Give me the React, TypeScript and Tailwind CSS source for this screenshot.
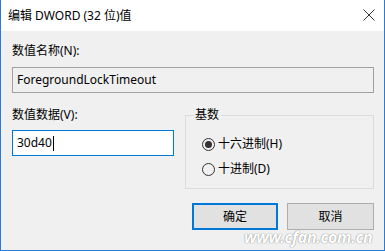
import React from "react";

const font = { fontFamily: '"Segoe UI", "Noto Sans", "Noto Sans CJK SC", sans-serif' };

export default function App() {
  return (
    <div
      className="w-[385px] h-[251px] flex flex-col bg-[#f0f0f0] border-x border-b border-[#2b7bd3] text-[12px] leading-[16px] text-black relative overflow-hidden"
      style={font}
    >
      {/* title bar */}
      <div className="h-[31px] bg-white flex items-center justify-between pl-[7px] pr-[9px]">
        <span className="text-[12px]">编辑 DWORD (32 位)值</span>
        <svg width="12" height="12" viewBox="0 0 12 12" className="mb-[1px]">
          <path d="M0.5 0.5 L11.5 11.5 M11.5 0.5 L0.5 11.5" stroke="#333" strokeWidth="1" />
        </svg>
      </div>

      <div className="flex flex-col pl-[11px] pr-[10px]">
        <div className="mt-[12px]">数值名称(N):</div>
        <div className="mt-[8px] h-[26px] border border-[#a0a0a0] bg-[#f0f0f0] flex items-center pl-[4px]">
          ForegroundLockTimeout
        </div>

        <div className="flex gap-[11px] mt-[14px]">
          <div className="w-[162px] flex flex-col">
            <div>数值数据(V):</div>
            <div className="mt-[7px] h-[26px] border border-[#0078d7] bg-white flex items-center pl-[4px]">
              30d40
              <span className="w-px h-[15px] bg-black ml-[1px]" />
            </div>
          </div>

          <fieldset className="w-[189px] h-[82px] border border-[#dcdcdc] pl-[16px]">
            <legend className="ml-[-8px] pl-[1px] pr-[2px]">基数</legend>
            <label className="flex items-center gap-[3px] mt-[13px]">
              <span className="w-[13px] h-[13px] rounded-full border border-[#333] flex items-center justify-center">
                <span className="w-[7px] h-[7px] rounded-full bg-[#333]" />
              </span>
              十六进制(H)
            </label>
            <label className="flex items-center gap-[3px] mt-[9px]">
              <span className="w-[13px] h-[13px] rounded-full border border-[#333]" />
              十进制(D)
            </label>
          </fieldset>
        </div>

        <div className="flex justify-end gap-[9px] mt-[14px]">
          <button className="w-[86px] h-[27px] bg-[#e1e1e1] border-2 border-[#0078d7]">确定</button>
          <button className="w-[87px] h-[27px] bg-[#e1e1e1] border border-[#adadad]">取消</button>
        </div>
      </div>

      <div className="absolute left-[243px] top-[228px] text-[16px] leading-[18px] font-bold italic text-white tracking-[-0.3px] [text-shadow:0_0_1px_#8a8a8a,0_0_1px_#8a8a8a]">
        www.cfan.com.cn
      </div>
    </div>
  );
}
